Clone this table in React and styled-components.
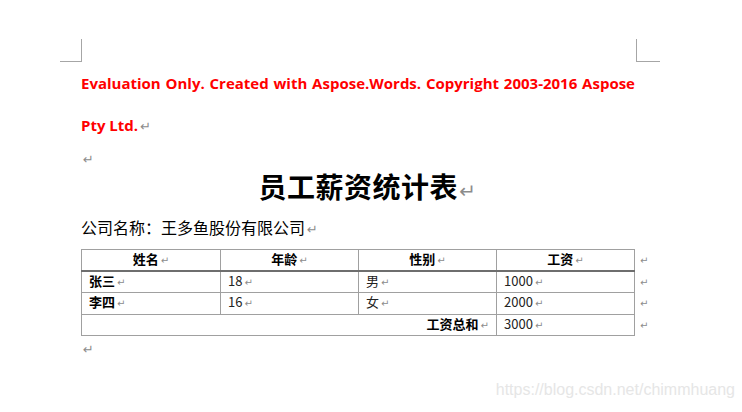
import React from "react";
import styled, { createGlobalStyle } from "styled-components";

const GlobalStyle = createGlobalStyle`
  html, body {
    margin: 0;
    padding: 0;
    background: #ffffff;
  }
  body {
    font-family: "Noto Sans CJK SC", "Noto Sans", sans-serif;
    color: #000;
  }
`;

const rows = [
  { name: "张三", age: "18", sex: "男", pay: "1000" },
  { name: "李四", age: "16", sex: "女", pay: "2000" },
];

export default function App() {
  return (
    <Screen>
      <GlobalStyle />
      <Page>
        <CornerRow>
          <Corner side="left" />
          <Corner side="right" />
        </CornerRow>
        <Content>
          <Warning>
            Evaluation Only. Created with Aspose.Words. Copyright 2003-2016 Aspose
            Pty Ltd.<Mark size={13} />
          </Warning>
          <EmptyPara>
            <Mark size={13} />
          </EmptyPara>
          <Title>
            员工薪资统计表<TitleMark>↵</TitleMark>
          </Title>
          <Company>
            公司名称：王多鱼股份有限公司<Mark size={13} />
          </Company>
          <Table>
            <colgroup>
              <col style={{ width: 139 }} />
              <col style={{ width: 138 }} />
              <col style={{ width: 138 }} />
              <col style={{ width: 138 }} />
              <col style={{ width: 14 }} />
            </colgroup>
            <tbody>
              <HeadRow>
                <HeadCell>姓名<Mark /></HeadCell>
                <HeadCell>年龄<Mark /></HeadCell>
                <HeadCell>性别<Mark /></HeadCell>
                <HeadCell>工资<Mark /></HeadCell>
                <EndCell><Mark /></EndCell>
              </HeadRow>
              {rows.map((r) => (
                <BodyRow key={r.name}>
                  <Cell bold>{r.name}<Mark /></Cell>
                  <Cell>{r.age}<Mark /></Cell>
                  <Cell>{r.sex}<Mark /></Cell>
                  <Cell>{r.pay}<Mark /></Cell>
                  <EndCell><Mark /></EndCell>
                </BodyRow>
              ))}
              <BodyRow>
                <Cell colSpan={3} bold align="right">工资总和<Mark /></Cell>
                <Cell>3000<Mark /></Cell>
                <EndCell><Mark /></EndCell>
              </BodyRow>
            </tbody>
          </Table>
          <AfterTable>
            <Mark size={13} />
          </AfterTable>
        </Content>
      </Page>
      <Watermark>https://blog.csdn.net/chimmhuang</Watermark>
    </Screen>
  );
}

function Mark({ size = 10 }) {
  return <MarkGlyph size={size}>↵</MarkGlyph>;
}

const Screen = styled.div`
  position: relative;
  width: 742px;
  height: 412px;
  overflow: hidden;
  background: #fff;
`;

const Page = styled.div`
  width: 600px;
  margin-left: 60px;
  padding-top: 39px;
`;

const CornerRow = styled.div`
  display: flex;
  justify-content: space-between;
  height: 23px;
`;

const Corner = styled.div`
  width: 21px;
  height: 22px;
  border-bottom: 1px solid #a6a6a6;
  ${(p) =>
    p.side === "left"
      ? "border-right: 1px solid #a6a6a6;"
      : "border-left: 1px solid #a6a6a6; width: 23px;"}
`;

const Content = styled.div`
  padding-left: 21px;
  width: 555px;
  display: flex;
  flex-direction: column;
`;

const Warning = styled.p`
  margin: 0;
  color: #ff0000;
  font-family: "Open Sans", "Noto Sans", sans-serif;
  font-weight: 700;
  font-size: 15px;
  line-height: 42px;
  text-align: justify;
  padding-right: 1px;
`;

const MarkGlyph = styled.span`
  color: #8c8c8c;
  font-family: "DejaVu Sans", sans-serif;
  font-weight: 400;
  font-size: ${(p) => p.size}px;
  margin-left: 2px;
`;

const EmptyPara = styled.div`
  height: 17px;
  line-height: 19px;
`;

const Title = styled.h1`
  margin: 0;
  height: 42px;
  line-height: 42px;
  text-align: center;
  font-family: "Noto Sans CJK SC", sans-serif;
  font-weight: 700;
  font-size: 28px;
  letter-spacing: 0.5px;
  padding-left: 18px;
`;

const TitleMark = styled.span`
  color: #8c8c8c;
  font-family: "DejaVu Sans", sans-serif;
  font-weight: 400;
  font-size: 20px;
  margin-left: 1px;
`;

const Company = styled.div`
  margin-top: 8px;
  height: 24px;
  line-height: 24px;
  font-size: 16px;
  font-family: "Noto Sans CJK SC", sans-serif;
`;

const Table = styled.table`
  margin-top: 10px;
  border-collapse: collapse;
  table-layout: fixed;
  width: 567px;
  font-family: "Noto Sans CJK SC", "Liberation Sans", sans-serif;
  font-size: 13px;
`;

const HeadRow = styled.tr`
  height: 20px;
`;

const BodyRow = styled.tr`
  height: 21.5px;
`;

const HeadCell = styled.td`
  border: 1px solid #a0a0a0;
  border-bottom: 2px solid #6e6e6e;
  text-align: center;
  font-weight: 700;
  padding: 0 7px;
  line-height: 18px;
`;

const Cell = styled.td`
  border: 1px solid #a0a0a0;
  padding: 0 7px;
  line-height: 18px;
  text-align: ${(p) => p.align || "left"};
  font-weight: ${(p) => (p.bold ? 700 : 400)};
  color: ${(p) => (p.bold ? "#000" : "#222")};
`;

const EndCell = styled.td`
  border: none;
  padding: 0 0 0 3px;
  line-height: 18px;
`;

const AfterTable = styled.div`
  height: 22px;
  line-height: 22px;
`;

const Watermark = styled.div`
  position: absolute;
  right: 7px;
  top: 380px;
  color: #e6e6e6;
  font-family: "Liberation Sans", Arial, sans-serif;
  font-size: 16px;
  line-height: 20px;
`;
